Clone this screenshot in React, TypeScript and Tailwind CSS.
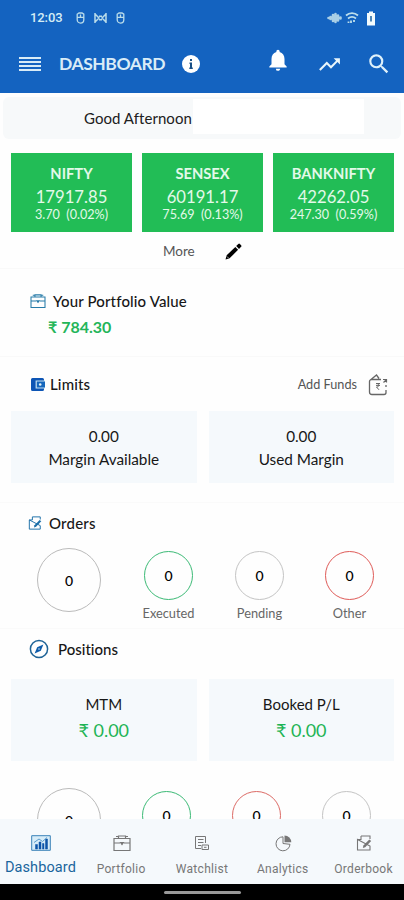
import React from 'react';
import clsx from 'clsx';
import { MdNotifications, MdSearch, MdTrendingUp } from 'react-icons/md';

type IconProps = { className?: string };

const indices = [
  { name: 'NIFTY', value: '17917.85', change: '3.70  (0.02%)' },
  { name: 'SENSEX', value: '60191.17', change: '75.69  (0.13%)' },
  { name: 'BANKNIFTY', value: '42262.05', change: '247.30  (0.59%)' },
];

const BriefcaseIcon = ({ className }: IconProps) => (
  <svg viewBox="0 0 18 16" fill="none" stroke="currentColor" className={className}>
    <path d="M1 3.500h16v12H1zM5.500 3.500V1h7v2.500M1 8h6M11 8h6M3 1.500h2M13 1.500h2" strokeWidth="1.200" />
    <path d="M6.500 7h5L9 10.500z" fill="currentColor" stroke="none" />
  </svg>
);

const OrderIcon = ({ className }: IconProps) => (
  <svg viewBox="0 0 16 16" fill="none" stroke="currentColor" className={className}>
    <path d="M5 1H14v3M14 11v4H1.500V4.500zM5 1v3.500H1.500" strokeWidth="1.100" />
    <path d="M6.800 13l.6-2.400L13.300 4.500l1.900 1.600-6 6.100z" fill="currentColor" stroke="none" />
  </svg>
);

const PencilIcon = ({ className }: IconProps) => (
  <svg viewBox="0 0 17 17" fill="black" className={className}>
    <path d="M.5 16.500l1.200-4.300L10.300 4l2.800 2.800-8.500 8.500zM11.200 3.100L13.300 1q.8-.8 1.600 0l1.200 1.200q.8.800 0 1.600L14 5.900z" />
    <path d="M2 13.500l1.500 1.500" stroke="#aaa" />
  </svg>
);

const WalletIcon = ({ className }: IconProps) => (
  <svg viewBox="0 0 14 13" className={className}>
    <path d="M1.500 0H11.500A1.500 1.500 0 0 1 13 1.500V11.500A1.500 1.500 0 0 1 11.500 13H1.500A1.500 1.500 0 0 1 0 11.500V1.500A1.500 1.500 0 0 1 1.500 0z" fill="#0d55b5" />
    <path d="M14 3H5.200v7H14" fill="#1667bd" stroke="#c5e2f2" strokeWidth="1.200" />
    <circle cx="9.200" cy="6.500" r="1.300" fill="#e8f5fb" />
  </svg>
);

const CompassIcon = ({ className }: IconProps) => (
  <svg viewBox="0 0 20 20" fill="none" className={className}>
    <circle cx="10" cy="10" r="8.600" stroke="#1e6396" strokeWidth="1.500" />
    <path d="M14.400 5.600l-2.600 6.200-6.200 2.600 2.600-6.200z" fill="#0d5cab" />
    <circle cx="10" cy="10" r=".8" fill="#d9edf8" />
  </svg>
);

const AddFundsIcon = ({ className }: IconProps) => (
  <svg viewBox="0 0 20 22" fill="none" stroke="#666" strokeWidth="1.300" className={className}>
    <path d="M13 5.500H3.500a2 2 0 0 0-2 2V18a2.500 2.500 0 0 0 2.500 2.500h12a2 2 0 0 0 2-2V16M18 13v-2M3 5.500L8.500 1l2.500 3.500" />
    <path d="M8 9.500h4M8 11.400h4M8.200 9.500c3.500 0 3.500 3.500.3 3.500l2.500 2.800" strokeWidth="1" />
    <path d="M15 5.500h3.500v3M18.500 5.500L15.500 8.500" strokeWidth="1.200" />
  </svg>
);

const ChartIcon = ({ className }: IconProps) => (
  <svg viewBox="0 0 20 16" fill="none" className={className}>
    <path d="M.7.700h18.600v14.600H.7z" fill="#d6ecf8" stroke="#3b83b8" />
    <path d="M4.500 14V9.500h2V14zM8 14V7h2v7zM11.500 14V8.500h1.500V14zM14.500 14V4h2v10z" fill="#0d55a8" stroke="#0d55a8" strokeWidth=".5" />
    <path d="M3 7.500l5-3.500 3.500 2.500 4.500-4" stroke="#5b9ccb" />
  </svg>
);

const WatchlistIcon = ({ className }: IconProps) => (
  <svg viewBox="0 0 16 16" fill="none" stroke="currentColor" className={className}>
    <path d="M7 13.500H1.500v-12h10V8M4 4.500h5.500M4 7.500h5.500M4 10.500h3M8 10h6.500v4.500H8zM10 12.300h2.500" />
  </svg>
);

const PieIcon = ({ className }: IconProps) => (
  <svg viewBox="0 0 17 17" fill="none" stroke="currentColor" className={className}>
    <path d="M8 1.800a7 7 0 1 0 7 7.500L8 8.500z" />
    <path d="M9.500.500a6.800 6.800 0 0 1 6.800 6.800H9.500z" fill="currentColor" stroke="none" />
  </svg>
);

const MouseIcon = ({ className }: IconProps) => (
  <svg viewBox="0 0 9 12" fill="none" stroke="#b9dcea" strokeWidth="1.300" className={className}>
    <path d="M1.200 2.200L3 1h3l1.800 1.200v5.600a3.300 3.300 0 0 1-6.600 0zM1 5.400h7M4.500 2.500v3" />
  </svg>
);

const StatusBar = () => (
  <div className="flex h-9 items-center pl-[30px] pr-7 font-['Roboto'] text-[13px] font-medium text-[#d5edf5]">
    <span className="tracking-[-0.1px]">12:03</span>
    <div className="ml-3.5 flex items-center gap-[9px]">
      <MouseIcon className="h-3 w-[9px]" />
      <svg viewBox="0 0 13 10" className="h-2.5 w-[13px]" fill="none" stroke="#b9dcea" strokeWidth="1.500">
        <path d="M1 0v10M12 0v10M1 1l4 4-4 4M12 1L8 5l4 4M5 3.200h3M5 6.800h3" />
      </svg>
      <MouseIcon className="h-3 w-[9px]" />
    </div>
    <div className="ml-auto flex items-center gap-[3px]">
      <svg viewBox="0 0 15 12" className="h-3 w-[15px]" stroke="#a9cfe6" strokeWidth="2.600" strokeLinecap="round">
        <path d="M1.500 6h.1M3.500 5v2M6 3v6M8.500 2v8M11 3.500v5M13.500 5.500v1" />
      </svg>
      <svg viewBox="0 0 14 12" className="h-3 w-3.5" fill="none" stroke="#bddfec" strokeWidth="1.800">
        <path d="M1 3.500C4.500.3 9.500.3 13 3.500M3 6.500c2.500-2 5.500-2 8 0M6 11V8.500M9 8v2M3.500 11V9.500" />
      </svg>
      <svg viewBox="0 0 10 15" className="ml-1 h-[15px] w-2.5">
        <path d="M3 .5h4V2h2v12.500H1V2h2z" fill="#f3fbfd" />
        <path d="M4 5h2v5.500H4z" fill="#4f87b8" />
      </svg>
    </div>
  </div>
);

const Header = () => (
  <header className="h-[93px] shrink-0 bg-[#1463c0]">
    <StatusBar />
    <div className="flex h-14 items-center pl-[19px] pr-3 text-white">
      <div className="flex h-[15px] w-[22px] flex-col justify-between">
        {[0, 1, 2, 3].map((i) => (
          <span key={i} className="h-0.5 bg-[#d9ecf7]" />
        ))}
      </div>
      <h1 className="ml-[18px] w-[108px] whitespace-nowrap text-[17.500px] font-bold tracking-[-0.45px] text-[#d9ecf7]">DASHBOARD</h1>
      <svg viewBox="0 0 18 18" className="ml-[15px] size-[18px]">
        <circle cx="9" cy="9" r="9" fill="white" />
        <path d="M8 4h2v2H8zM7.500 7.500H10v5h.8V14H7.300v-1.500H8V9h-.5z" fill="#184f86" />
      </svg>
      <MdNotifications className="mb-2 ml-auto size-[26px]" />
      <MdTrendingUp className="ml-[26px] size-[25px] text-[#eaf6fb]" />
      <MdSearch className="ml-6 size-[26px] text-[#dff1fa]" />
    </div>
  </header>
);

const Ring = ({ label, color, large }: { label?: string; color: string; large?: boolean }) => (
  <div className="flex flex-col items-center">
    <div
      className={clsx(
        'flex items-center justify-center rounded-full border text-black',
        large ? 'size-16' : 'size-[49px]',
        color
      )}
    >
      <span className="text-[14px] font-medium">0</span>
    </div>
    {label && <span className="mt-1 text-[12.800px] leading-[18px] text-[#666]">{label}</span>}
  </div>
);

interface StatBoxProps {
  top: string;
  bottom: string;
  tall?: boolean;
}

const StatBox = ({ top, bottom, tall }: StatBoxProps) => (
  <div className={clsx('bg-[#f5f9fc] text-center text-[#171717]', tall ? 'h-[82px] pt-3.5 text-[15px]' : 'h-[72px] pt-3.5 text-[15.300px]')}>
    <p className="leading-[23px]">{top}</p>
    <p className={tall ? 'text-[18px] leading-[28px] text-[#1eb455]' : 'leading-[23px]'}>{bottom}</p>
  </div>
);

const NavItem = ({ label, icon, active }: { label: string; icon: React.ReactNode; active?: boolean }) => (
  <div className={clsx('flex flex-col items-center pt-4', active ? 'text-[#1a659c]' : 'text-[#777]')}>
    <div className="flex h-4 items-center pl-px">{icon}</div>
    <span
      className={clsx(
        'whitespace-nowrap leading-5',
        active ? 'mt-[7px] text-[14.500px] tracking-[0.1px]' : 'mt-2 text-[12px] tracking-[0.3px]'
      )}
    >
      {label}
    </span>
  </div>
);

export default function App() {
  return (
    <div className="flex h-[900px] w-[404px] flex-col overflow-hidden bg-[#fefefe] font-['Lato',sans-serif] [font-variant-ligatures:none]">
      <Header />

      <main className="min-h-0 flex-1 overflow-hidden">
        <div className="mx-[3px] mt-1 flex h-[42px] items-center rounded-md bg-[#f7f9fa] pl-[81px]">
          <span className="w-[109px] whitespace-nowrap text-[15px] tracking-[0.05px] text-[#202020]">Good Afternoon</span>
          <div className="mb-1 h-[35px] w-[171px] bg-white" />
        </div>

        <div className="ml-[11px] mr-2.5 mt-3.5 grid grid-cols-3 gap-2.5">
          {indices.map((item) => (
            <div key={item.name} className="h-[79px] bg-[#22bd56] pt-[11px] text-center text-[#e3f9e9]">
              <p className="text-[14.700px] font-bold leading-[18px]">{item.name}</p>
              <p className="mt-[5px] text-[16.700px] leading-5">{item.value}</p>
              <p className="whitespace-pre text-[12.600px] leading-[15px]">{item.change}</p>
            </div>
          ))}
        </div>
        <div className="flex h-[37px] items-center border-b border-[#f9f9f9] pl-[163px] pt-0.5 text-[13.500px] text-[#555]">
          <span className="w-[62px]">More</span>
          <PencilIcon className="size-[17px]" />
        </div>

        <section className="h-[88px] border-b border-[#f9f9f9] pl-[30px] pt-[22px]">
          <div className="flex h-5 items-center">
            <BriefcaseIcon className="h-3.5 w-4 text-[#277ba8]" />
            <h2 className="ml-[7px] text-[15px] font-medium tracking-[0.15px] text-[#171717]">Your Portfolio Value</h2>
          </div>
          <p className="ml-[18px] mt-1 text-[16px] font-bold leading-6 text-[#24b559]">₹ 784.30</p>
        </section>

        <section className="h-[146px] border-b border-[#fafafa] pt-[17px]">
          <div className="flex h-5 items-center pl-[31px] pr-4">
            <WalletIcon className="h-[13px] w-3.5" />
            <h2 className="ml-[5px] text-[15px] font-medium tracking-[0.15px] text-[#171717]">Limits</h2>
            <span className="ml-auto mt-0.5 text-[12.700px] text-[#555]">Add Funds</span>
            <AddFundsIcon className="ml-[11px] mt-0.5 h-[22px] w-5" />
          </div>
          <div className="ml-[11px] mr-2.5 mt-[17px] grid grid-cols-2 gap-3">
            <StatBox top="0.00" bottom="Margin Available" />
            <StatBox top="0.00" bottom="Used Margin" />
          </div>
        </section>

        <section className="h-[126px] border-b border-[#fafafa] pt-2.5">
          <div className="flex h-5 items-center pl-7">
            <OrderIcon className="size-3.5 text-[#1c6fa8]" />
            <h2 className="ml-[7px] text-[15px] font-medium tracking-[0.2px] text-[#171717]">Orders</h2>
          </div>
          <div className="mt-[15px] flex items-start pl-[37px]">
            <Ring color="border-[#bbb]" large />
            <div className="ml-[35px] mt-[3px] w-[65px]"><Ring label="Executed" color="border-[#3cba76]" /></div>
            <div className="ml-[26px] mt-[3px] w-[65px]"><Ring label="Pending" color="border-[#c4c4c4]" /></div>
            <div className="ml-[25px] mt-[3px] w-[65px]"><Ring label="Other" color="border-[#df5b58]" /></div>
          </div>
        </section>

        <section className="pt-2.5">
          <div className="flex h-5 items-center pl-[29px]">
            <CompassIcon className="size-5" />
            <h2 className="ml-[9px] text-[15px] font-medium text-[#171717]">Positions</h2>
          </div>
          <div className="ml-[11px] mr-2.5 mt-5 grid grid-cols-2 gap-3">
            <StatBox top="MTM" bottom="₹ 0.00" tall />
            <StatBox top="Booked P/L" bottom="₹ 0.00" tall />
          </div>
          <div className="mt-[27px] flex items-start pl-[37px]">
            <Ring color="border-[#bbb]" large />
            <div className="ml-[41px] mt-[3px] flex gap-[41px]">
              <Ring color="border-[#3cba76]" />
              <Ring color="border-[#dc6b66]" />
              <Ring color="border-[#c4c4c4]" />
            </div>
          </div>
        </section>
      </main>

      <nav className="grid h-[65px] shrink-0 grid-cols-5 bg-[#f5f9fc] font-['Roboto']">
        <NavItem label="Dashboard" icon={<ChartIcon className="h-4 w-5" />} active />
        <NavItem label="Portfolio" icon={<BriefcaseIcon className="h-4 w-[18px]" />} />
        <NavItem label="Watchlist" icon={<WatchlistIcon className="size-4" />} />
        <NavItem label="Analytics" icon={<PieIcon className="size-[17px]" />} />
        <NavItem label="Orderbook" icon={<OrderIcon className="size-4" />} />
      </nav>
      <div className="flex h-4 shrink-0 justify-center bg-black pt-[7px]">
        <div className="h-[3px] w-[77px] rounded-full bg-[#999]" />
      </div>
    </div>
  );
}
